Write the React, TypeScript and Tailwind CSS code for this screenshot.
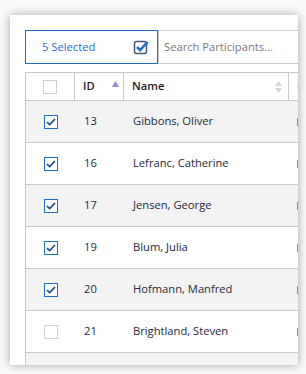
import React from "react";

const rows = [
  { id: 13, name: "Gibbons, Oliver", checked: true },
  { id: 16, name: "Lefranc, Catherine", checked: true },
  { id: 17, name: "Jensen, George", checked: true },
  { id: 19, name: "Blum, Julia", checked: true },
  { id: 20, name: "Hofmann, Manfred", checked: true },
  { id: 21, name: "Brightland, Steven", checked: false },
];

function Check({ checked }: { checked: boolean }) {
  if (!checked)
    return <div className="w-[14px] h-[14px] border border-[#cfcfcf] bg-white" />;
  return (
    <div className="w-[14px] h-[14px] border-[1.5px] border-[#1f6fc5] bg-white flex items-center justify-center">
      <svg width="10" height="8" viewBox="0 0 10 8">
        <path d="M1 4.2 L3.7 6.6 L9 1" fill="none" stroke="#1d4f8f" strokeWidth="1.8" />
      </svg>
    </div>
  );
}

export default function App() {
  return (
    <div
      className="w-[306px] h-[374px] bg-[#fafafa] pt-[15px] pl-[10px]"
      style={{ fontFamily: '"Open Sans", sans-serif' }}
    >
      <div className="w-[288px] h-[350px] bg-white shadow-[0_0_9px_rgba(0,0,0,0.35)] overflow-hidden pt-[15px] pl-[15px]">
        <div className="flex h-[34px] w-[300px]">
          <div className="w-[133px] h-[34px] border border-[#1f6fc5] flex items-center pl-[16px] pr-[7px] justify-between shrink-0">
            <span className="text-[11.2px] text-[#1f6fc5]">5 Selected</span>
            <svg width="17" height="16" viewBox="0 0 17 16" className="mt-[-1px]">
              <rect x="1.5" y="2.5" width="12" height="12" rx="2" fill="none" stroke="#46587a" strokeWidth="1.5" />
              <path d="M4 8 L7.2 11.2 L14.5 3" fill="none" stroke="#1f6fc5" strokeWidth="2.6" />
            </svg>
          </div>
          <div className="flex-1 h-[34px] border-y border-l border-[#cccccc] flex items-center pl-[5px]">
            <span className="text-[11.2px] text-[#7a7a7a]">Search Participants...</span>
          </div>
        </div>

        <div className="mt-[8px] w-[320px] border-l border-t border-[#c8c8c8]">
          <div className="flex h-[28px] border-b border-[#c8c8c8] text-[11.2px] text-[#1e1e1e]">
            <div className="w-[49px] shrink-0 border-r border-[#c8c8c8] flex items-center justify-center">
              <Check checked={false} />
            </div>
            <div className="w-[49px] shrink-0 border-r border-[#c8c8c8] flex items-center pl-[8px] pr-[4px] justify-between font-semibold">
              <span>ID</span>
              <svg width="7" height="6" viewBox="0 0 7 6" className="mt-[-6px]">
                <path d="M3.5 0 L7 6 L0 6 Z" fill="#8e8edb" />
              </svg>
            </div>
            <div className="w-[165px] shrink-0 border-r border-[#c8c8c8] flex items-center pl-[8px] pr-[6px] justify-between font-semibold">
              <span>Name</span>
              <svg width="7" height="12" viewBox="0 0 7 12">
                <path d="M3.5 0 L7 5 L0 5 Z" fill="#d4d4d4" />
                <path d="M3.5 12 L7 7 L0 7 Z" fill="#d4d4d4" />
              </svg>
            </div>
            <div className="flex-1 flex items-center pl-[8px]">
              <div className="w-[2px] h-[8px] bg-[#f5eaa8]" />
            </div>
          </div>
          {rows.map((r, i) => (
            <div
              key={r.id}
              className={`flex h-[42px] border-b border-[#c8c8c8] text-[11.2px] text-[#1e2a3a] ${i % 2 === 0 ? "bg-[#f3f3f3]" : "bg-white"}`}
            >
              <div className="w-[49px] shrink-0 flex items-center justify-center">
                <Check checked={r.checked} />
              </div>
              <div className="w-[49px] shrink-0 flex items-center pl-[9px]">{r.id}</div>
              <div className="w-[165px] shrink-0 flex items-center pl-[9px]">{r.name}</div>
              <div className="flex-1 flex items-center pl-[8px]">
                <div className="w-[2px] h-[8px] bg-[#c98a45]" />
              </div>
            </div>
          ))}
          <div className="h-[42px] bg-[#f3f3f3]" />
        </div>
      </div>
    </div>
  );
}
